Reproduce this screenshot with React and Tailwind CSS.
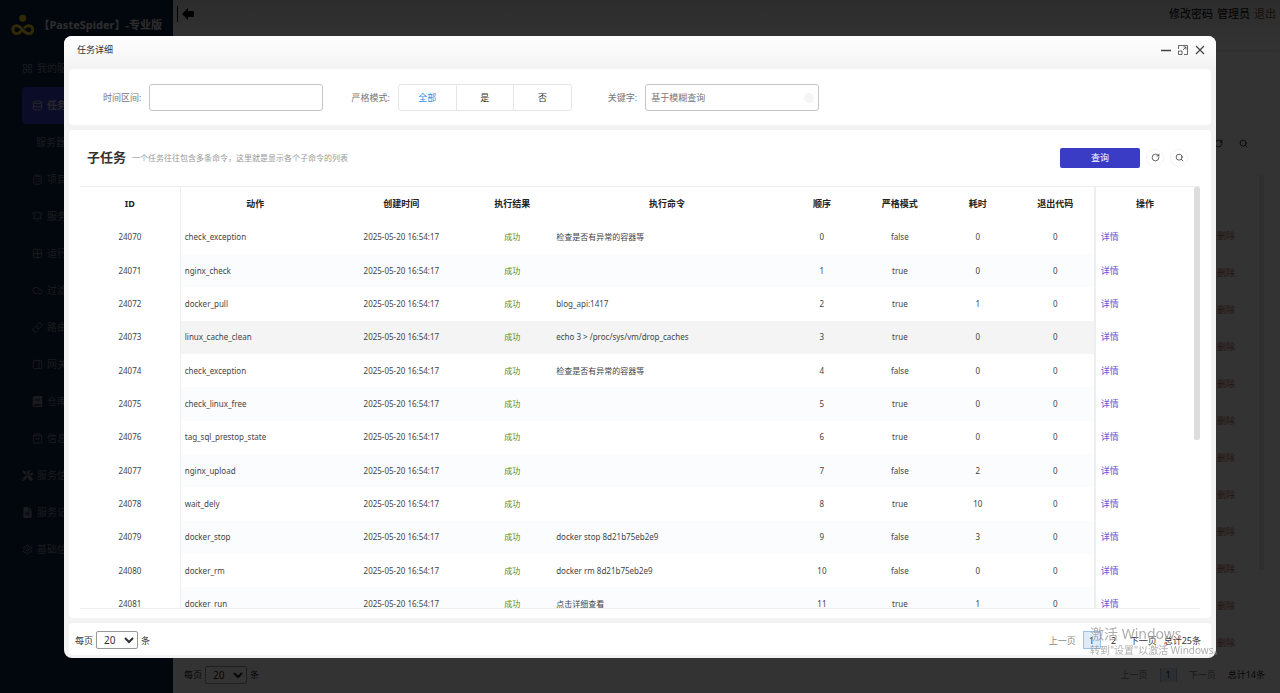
import React, { useState } from 'react';
import {
  LayoutGrid,
  Database,
  ClipboardList,
  BellRing,
  Grid2x2,
  Cloud,
  Link,
  PanelRight,
  Settings,
  ShoppingBag,
  RotateCw,
  Search,
} from 'lucide-react';
import { FaTools, FaFileAlt, FaBook } from 'react-icons/fa';

const menuItems = [
  { label: '我的服务', icon: LayoutGrid, level: 'top' },
  { label: '任务列表', icon: Database, level: 'sub', active: true },
  { label: '服务器', icon: null, level: 'plain' },
  { label: '项目', icon: ClipboardList, level: 'sub' },
  { label: '服务', icon: BellRing, level: 'sub' },
  { label: '运行', icon: Grid2x2, level: 'sub' },
  { label: '过滤', icon: Cloud, level: 'sub' },
  { label: '路由', icon: Link, level: 'sub' },
  { label: '网关', icon: PanelRight, level: 'sub' },
  { label: '仓库', icon: FaBook, level: 'sub' },
  { label: '信息', icon: ShoppingBag, level: 'sub' },
  { label: '服务信息', icon: FaTools, level: 'top' },
  { label: '服务记录', icon: FaFileAlt, level: 'top' },
  { label: '基础信息', icon: Settings, level: 'top' },
];

const levelClass = {
  top: 'pl-0',
  sub: 'pl-[10px]',
  plain: 'pl-[14px]',
};

const createdAt = '2025-05-20 16:54:17';

const tasks = [
  { id: 24070, action: 'check_exception', command: '检查是否有异常的容器等', strict: 'false', cost: 0 },
  { id: 24071, action: 'nginx_check', command: '', strict: 'true', cost: 0 },
  { id: 24072, action: 'docker_pull', command: 'blog_api:1417', strict: 'true', cost: 1 },
  { id: 24073, action: 'linux_cache_clean', command: 'echo 3 > /proc/sys/vm/drop_caches', strict: 'true', cost: 0 },
  { id: 24074, action: 'check_exception', command: '检查是否有异常的容器等', strict: 'false', cost: 0 },
  { id: 24075, action: 'check_linux_free', command: '', strict: 'true', cost: 0 },
  { id: 24076, action: 'tag_sql_prestop_state', command: '', strict: 'true', cost: 0 },
  { id: 24077, action: 'nginx_upload', command: '', strict: 'false', cost: 2 },
  { id: 24078, action: 'wait_dely', command: '', strict: 'true', cost: 10 },
  { id: 24079, action: 'docker_stop', command: 'docker stop 8d21b75eb2e9', strict: 'false', cost: 3 },
  { id: 24080, action: 'docker_rm', command: 'docker rm 8d21b75eb2e9', strict: 'false', cost: 0 },
  { id: 24081, action: 'docker_run', command: '点击详细查看', strict: 'true', cost: 1 },
];

function Logo() {
  return (
    <svg viewBox="0 0 26 24" className="h-6 w-[26px]" fill="none" stroke="#f5d327" strokeWidth="3.2" strokeLinecap="round">
      <circle cx="13" cy="4.500" r="3.800" fill="#f5d327" stroke="none" />
      <path d="M11 19c-1.500 2-3.500 2.800-5 2.500-5-.8-5.500-8.500 0-8.800 3.500 0 5 2.500 7 4.800s3.500 4 6.500 4c6 0 6-8.500.5-8.800-2 0-3.500.8-4.500 2" />
    </svg>
  );
}

// The list page that sits behind the dialog
function Sidebar() {
  return (
    <aside className="w-[173px] shrink-0 bg-[#0a2242] px-[11px] text-[10px] text-[#7f8794]">
      <div className="flex h-[50px] items-center gap-1">
        <Logo />
        <span className="whitespace-nowrap text-[11px] font-bold text-[#e0e0e0]">【PasteSpider】-专业版</span>
      </div>
      <nav className="pl-[11px]">
        {menuItems.map(({ label, icon: Icon, level, active }) => (
          <a
            key={label}
            href="#"
            className={`flex h-[37px] items-center gap-1 rounded-sm ${levelClass[level]} ${
              active ? 'bg-[#3b3cc6] font-bold text-[#c8c8d8]' : ''
            }`}
          >
            {Icon && <Icon size={11} />}
            {label}
          </a>
        ))}
      </nav>
    </aside>
  );
}

function PageSizeSelect({ id }) {
  return (
    <div className="flex items-center gap-[3px]">
      <label htmlFor={id}>每页</label>
      <select
        id={id}
        defaultValue="20"
        className="h-[18px] w-[42px] rounded-xs border border-[#999999] bg-transparent pl-[3px] text-[10px]"
      >
        <option>10</option>
        <option>20</option>
        <option>50</option>
      </select>
      <span>条</span>
    </div>
  );
}

function Background() {
  return (
    <div className="flex h-screen overflow-hidden bg-white">
      <Sidebar />
      <div className="flex min-w-0 grow flex-col">
        <header className="flex h-[50px] shrink-0 items-start justify-between bg-gradient-to-b from-[#dcdcdc] to-white px-1 pt-[6px] shadow">
          <div className="flex items-center gap-1">
            <span className="h-4 w-px bg-black" />
            <svg viewBox="0 0 12 12" className="h-3 w-3">
              <path d="M0 6 6 0v3h5q1 0 1 1v4q0 1-1 1H6v3z" fill="#000000" />
            </svg>
          </div>
          <div className="flex gap-1 text-[11px] text-black">
            <a href="#">修改密码</a>
            <a href="#">管理员</a>
            <a href="#" className="text-[#7a4a28]">退出</a>
          </div>
        </header>
        <div className="flex h-[125px] shrink-0 items-center justify-end gap-4 pr-8 pt-[62px] text-black">
          <RotateCw size={9} />
          <Search size={9} />
        </div>
        <div className="flex min-h-0 grow justify-end gap-6 overflow-hidden pr-4">
          <ul className="pt-[54px] text-[9px] text-[#b86464]">
            {tasks.map((task) => (
              <li key={task.id} className="h-[37px]">删除</li>
            ))}
          </ul>
          <div className="h-[395px] w-[5px] rounded bg-[#e4e4e4]" />
        </div>
        <footer className="flex h-9 shrink-0 items-center justify-between pl-[11px] pr-[15px] text-[9px] text-[#222222]">
          <PageSizeSelect id="list-page-size" />
          <div className="flex items-center gap-3">
            <span className="text-[#777777]">上一页</span>
            <span className="border-x border-[#9cc3e8] bg-[#dcecfb] px-[5px]">1</span>
            <span className="text-[#777777]">下一页</span>
            <span>总计14条</span>
          </div>
        </footer>
      </div>
    </div>
  );
}

function WindowButtons() {
  return (
    <div className="flex items-center gap-[7px] text-[#444444]">
      <button type="button" aria-label="最小化">
        <svg viewBox="0 0 10 10" className="h-[10px] w-[10px]" stroke="currentColor">
          <path d="M0 5.500h10" strokeWidth="1.300" />
        </svg>
      </button>
      <button type="button" aria-label="最大化">
        <svg viewBox="0 0 10 10" className="h-[10px] w-[10px]" fill="none" stroke="currentColor" strokeWidth="0.8">
          <path d="M.5 4V.5h9v9H6M.5 6h3.500v3.500H.5zM5 5l2.800-2.800M5.500 2H8v2.500" />
        </svg>
      </button>
      <button type="button" aria-label="关闭">
        <svg viewBox="0 0 10 10" className="h-[10px] w-[10px]" stroke="currentColor" strokeWidth="1.200">
          <path d="m1 1 8 8M9 1 1 9" />
        </svg>
      </button>
    </div>
  );
}

function SearchForm() {
  const [strict, setStrict] = useState('全部');

  return (
    <form className="flex h-14 shrink-0 items-center rounded bg-white pl-[34px] pt-[2px] text-[9px] text-[#777777]">
      <label htmlFor="range" className="mr-2">时间区间:</label>
      <input id="range" type="text" className="h-[27px] w-[174px] rounded-[3px] border border-[#c4c4c4] px-[5px]" />
      <span className="ml-7 mr-2">严格模式:</span>
      <div className="flex h-[27px] w-[174px] divide-x divide-[#e6e6e6] rounded-[3px] border border-[#e6e6e6]">
        {['全部', '是', '否'].map((option) => (
          <label
            key={option}
            className={`flex flex-1 items-center justify-center ${
              strict === option ? 'text-[#2a8fee]' : 'text-[#333333]'
            }`}
          >
            <input
              type="radio"
              name="strict"
              className="sr-only"
              checked={strict === option}
              onChange={() => setStrict(option)}
            />
            {option}
          </label>
        ))}
      </div>
      <label htmlFor="keyword" className="ml-9 mr-2">关键字:</label>
      <div className="flex h-[27px] w-[174px] items-center rounded-[3px] border border-[#c4c4c4] pl-[5px] pr-1">
        <input
          id="keyword"
          type="text"
          placeholder="基于模糊查询"
          className="min-w-0 grow outline-none placeholder:text-[#777777]"
        />
        <span className="h-[10px] w-[10px] rounded-full bg-[#f5f5f5]" />
      </div>
    </form>
  );
}

function TaskTable() {
  const rowBg = (index) => {
    if (index === 3) return 'bg-[#f4f4f4]';
    return index % 2 ? 'bg-[#fafcfe]' : 'bg-white';
  };

  return (
    <div className="flex min-h-0 grow overflow-hidden border-y border-[#eeeeee]">
      <table className="h-[434px] grow table-fixed border-collapse text-center text-[8px] leading-3 text-[#444444]">
        <colgroup>
          <col className="w-[9%]" />
          <col className="w-[13.4%]" />
          <col className="w-[12.9%]" />
          <col className="w-[7%]" />
          <col className="w-[20.8%]" />
          <col className="w-[7%]" />
          <col className="w-[7%]" />
          <col className="w-[7%]" />
          <col className="w-[7%]" />
          <col className="w-[8.900%]" />
        </colgroup>
        <thead>
          <tr className="h-[34px] text-[9px] text-[#222222]">
            <th className="border-r border-[#eeeeee]">ID</th>
            <th>动作</th>
            <th>创建时间</th>
            <th>执行结果</th>
            <th>执行命令</th>
            <th>顺序</th>
            <th>严格模式</th>
            <th>耗时</th>
            <th>退出代码</th>
            <th className="border-l-2 border-[#eeeeee]">操作</th>
          </tr>
        </thead>
        <tbody>
          {tasks.map((task, index) => (
            <tr key={task.id} className={rowBg(index)}>
              <td className="border-r border-[#eeeeee] bg-white">{task.id}</td>
              <td className="pl-1 text-left">{task.action}</td>
              <td>{createdAt}</td>
              <td className="text-[#5c8a1e]">成功</td>
              <td className="pl-[5px] text-left">{task.command}</td>
              <td>{index}</td>
              <td>{task.strict}</td>
              <td>{task.cost}</td>
              <td>0</td>
              <td className="border-l-2 border-[#eeeeee] bg-white pl-[5px] text-left text-[9px]">
                <a href="#" className="text-[#6a55d8]">详情</a>
              </td>
            </tr>
          ))}
        </tbody>
      </table>
      <div className="w-[6px] shrink-0">
        <div className="h-[60%] rounded-xs bg-[#dddddd]" />
      </div>
    </div>
  );
}

function Pager() {
  return (
    <div className="flex items-center text-[9px] text-[#333333]">
      <button type="button" className="mr-1 px-[3px] text-[#888888]">上一页</button>
      <button type="button" className="h-[18px] w-[18px] border border-[#9cc3e8] bg-[#dcecfb]">1</button>
      <button type="button" className="w-[26px]">2</button>
      <button type="button" className="px-[3px]">下一页</button>
      <span className="ml-1">总计25条</span>
    </div>
  );
}

function TaskDialog() {
  return (
    <section
      role="dialog"
      aria-label="任务详细"
      className="flex h-[90%] w-[90%] flex-col overflow-hidden rounded-lg bg-[#f3f3f3] px-[5px] pb-[3px]"
    >
      <header className="-mx-[5px] flex h-8 shrink-0 items-center justify-between bg-gradient-to-b from-white to-[#f3f3f3] pb-[3px] pl-[13px] pr-[11px]">
        <h1 className="text-[9px] text-[#333333]">任务详细</h1>
        <WindowButtons />
      </header>
      <div className="flex min-h-0 grow flex-col gap-[5px] pt-px">
        <SearchForm />
        <div className="flex min-h-0 grow flex-col rounded bg-white px-[11px] pb-[9px]">
          <div className="flex h-14 shrink-0 items-center gap-[6px] pl-[7px] pr-3">
            <h2 className="text-[13px] font-bold text-[#333333]">子任务</h2>
            <p className="grow text-[8px] text-[#999999]">
              一个任务往往包含多条命令，这里就是显示各个子命令的列表
            </p>
            <button type="button" className="h-5 w-20 rounded-xs bg-[#3b3cc6] text-[9px] text-white">
              查询
            </button>
            <button
              type="button"
              aria-label="刷新"
              className="flex h-[18px] w-[18px] items-center justify-center rounded-full border border-[#f5f5f5] text-[#333333]"
            >
              <RotateCw size={9} />
            </button>
            <button
              type="button"
              aria-label="搜索"
              className="flex h-[18px] w-[18px] items-center justify-center rounded-full border border-[#f5f5f5] text-[#333333]"
            >
              <Search size={9} />
            </button>
          </div>
          <TaskTable />
        </div>
        <footer className="flex h-8 shrink-0 items-center justify-between rounded bg-white pl-[6px] pr-[10px] pt-[2px] text-[9px] text-[#333333]">
          <PageSizeSelect id="task-page-size" />
          <Pager />
        </footer>
      </div>
    </section>
  );
}

export default function App() {
  return (
    <div className="font-['Noto_Sans','Noto_Sans_CJK_SC',sans-serif]">
      <Background />
      <div className="fixed inset-0 flex items-center justify-center bg-black/80 pt-px">
        <TaskDialog />
      </div>
      <div className="pointer-events-none fixed bottom-[35px] right-[65px] w-[125px] whitespace-nowrap text-[#999999]/80">
        <p className="text-[14px] leading-4">激活 Windows</p>
        <p className="text-[10px] leading-4">转到"设置"以激活 Windows。</p>
      </div>
    </div>
  );
}
